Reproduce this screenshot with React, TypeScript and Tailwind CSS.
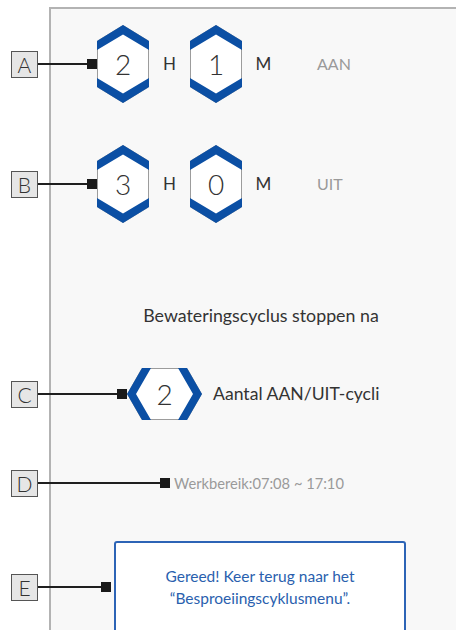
import React from "react"

const font = { fontFamily: "Lato, 'Liberation Sans', sans-serif" }

function Label({ letter }: { letter: string }) {
  return (
    <div className="w-[27px] h-[27px] shrink-0 flex items-center justify-center border border-[#555] bg-[#e6e6e6] text-[21px] font-light text-[#333] leading-none">
      {letter}
    </div>
  )
}

function Pointer({ length }: { length: number }) {
  return (
    <div className="flex items-center shrink-0">
      <div className="h-[2px] bg-[#1f1f1f]" style={{ width: length }} />
      <div className="w-[10px] h-[10px] bg-[#1a1a1a]" />
    </div>
  )
}

// pointy top/bottom hexagon with blue bands
function HexV({ value }: { value: string }) {
  return (
    <div className="relative w-[52px] h-[78px] shrink-0 flex items-center justify-center">
      <svg width="52" height="78" viewBox="0 0 52 78" className="absolute inset-0">
        <polygon points="26,0.5 51.5,16 51.5,62 26,77.5 0.5,62 0.5,16" fill="#ffffff" stroke="#9c9c9c" strokeWidth="1" />
        <polygon points="0,16 26,0 52,16 52,25 26,9.5 0,25" fill="#0b4fa4" />
        <polygon points="0,53 26,68.5 52,53 52,62 26,78 0,62" fill="#0b4fa4" />
      </svg>
      <span className="relative text-[28px] font-light text-[#333]">{value}</span>
    </div>
  )
}

// pointy left/right hexagon
function HexH({ value }: { value: string }) {
  return (
    <div className="relative w-[75px] h-[52px] shrink-0 flex items-center justify-center">
      <svg width="75" height="52" viewBox="0 0 75 52" className="absolute inset-0">
        <polygon points="0.5,26 15,0.5 60,0.5 74.5,26 60,51.5 15,51.5" fill="#ffffff" stroke="#9c9c9c" strokeWidth="1" />
        <polygon points="15,0 24,0 9,26 24,52 15,52 0,26" fill="#0b4fa4" />
        <polygon points="51,0 60,0 75,26 60,52 51,52 66,26" fill="#0b4fa4" />
      </svg>
      <span className="relative text-[28px] font-light text-[#333]">{value}</span>
    </div>
  )
}

function TimeRow({ letter, h, m, state }: { letter: string; h: string; m: string; state: string }) {
  return (
    <div className="flex items-center h-[78px] -ml-[40px]">
      <Label letter={letter} />
      <Pointer length={49} />
      <HexV value={h} />
      <span className="w-[41px] text-center text-[17px] text-[#333]">H</span>
      <HexV value={m} />
      <span className="w-[43px] text-center text-[17px] text-[#333]">M</span>
      <span className="ml-[32px] text-[16px] text-[#9a9a9a]">{state}</span>
    </div>
  )
}

export default function App() {
  return (
    <div className="w-[456px] h-[630px] overflow-hidden bg-white" style={font}>
      <div className="ml-[49px] mt-[7px] w-[422px] h-[640px] border-l-2 border-t-2 border-[#b3b3b3] bg-[#f8f8f8] flex flex-col">
        <div className="mt-[16px]">
          <TimeRow letter="A" h="2" m="1" state="AAN" />
        </div>
        <div className="mt-[42px]">
          <TimeRow letter="B" h="3" m="0" state="UIT" />
        </div>

        <p className="mt-[80px] h-[24px] leading-[24px] text-center text-[17.8px] text-[#333]">
          Bewateringscyclus stoppen na
        </p>

        <div className="mt-[41px] flex items-center h-[52px] -ml-[40px]">
          <Label letter="C" />
          <Pointer length={79} />
          <HexH value="2" />
          <span className="ml-[11px] text-[17.6px] text-[#333]">Aantal AAN/UIT-cycli</span>
        </div>

        <div className="mt-[49px] flex items-center h-[28px] -ml-[40px]">
          <Label letter="D" />
          <Pointer length={122} />
          <span className="ml-[4px] text-[14.7px] text-[#9a9a9a]">Werkbereik:07:08 ~ 17:10</span>
        </div>

        <div className="mt-[44px] flex items-center -ml-[40px]">
          <Label letter="E" />
          <Pointer length={63} />
          <div className="ml-[3px] w-[292px] h-[92px] shrink-0 border-2 border-[#2d64b6] rounded-[3px] bg-white flex items-center justify-center">
            <p className="text-center text-[15.5px] leading-[22px] text-[#2a5fae]">
              Gereed! Keer terug naar het
              <br />
              “Besproeiingscyklusmenu”.
            </p>
          </div>
        </div>
      </div>
    </div>
  )
}
